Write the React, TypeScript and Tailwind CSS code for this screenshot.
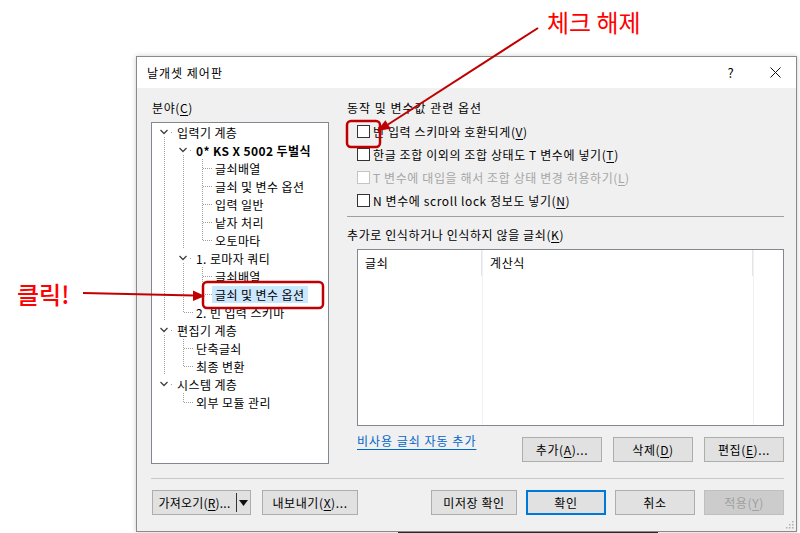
import React from 'react';

type Row = {
  label: string;
  level: number;
  chev?: boolean;
  next: boolean;
  anc: boolean[];
  bold?: boolean;
  selected?: boolean;
};

const rows: Row[] = [
  { label: '입력기 계층', level: 0, chev: true, next: true, anc: [] },
  { label: '0* KS X 5002 두벌식', level: 1, chev: true, next: true, anc: [true], bold: true },
  { label: '글쇠배열', level: 2, next: true, anc: [true, true] },
  { label: '글쇠 및 변수 옵션', level: 2, next: true, anc: [true, true] },
  { label: '입력 일반', level: 2, next: true, anc: [true, true] },
  { label: '낱자 처리', level: 2, next: true, anc: [true, true] },
  { label: '오토마타', level: 2, next: false, anc: [true, true] },
  { label: '1. 로마자 쿼티', level: 1, chev: true, next: true, anc: [true] },
  { label: '글쇠배열', level: 2, next: true, anc: [true, true] },
  { label: '글쇠 및 변수 옵션', level: 2, next: false, anc: [true, true], selected: true },
  { label: '2. 빈 입력 스키마', level: 1, next: false, anc: [true] },
  { label: '편집기 계층', level: 0, chev: true, next: true, anc: [] },
  { label: '단축글쇠', level: 1, next: true, anc: [true] },
  { label: '최종 변환', level: 1, next: false, anc: [true] },
  { label: '시스템 계층', level: 0, chev: true, next: false, anc: [] },
  { label: '외부 모듈 관리', level: 1, next: false, anc: [false] },
];

const DOT = '#a0a0a0';

// one 19x18 cell of the tree's dotted connectors
const Cell: React.FC<{ kind: 'pipe' | 'blank' | 'leaf' | 'chev'; next?: boolean }> = ({ kind, next }) => (
  <svg width="19" height="18" className="flex-none" shapeRendering="crispEdges">
    {kind === 'pipe' && <line x1="9.5" y1="0" x2="9.5" y2="18" stroke={DOT} strokeDasharray="1 1" />}
    {kind === 'leaf' && (
      <>
        <line x1="9.5" y1="0" x2="9.5" y2={next ? 18 : 10} stroke={DOT} strokeDasharray="1 1" />
        <line x1="10" y1="9.5" x2="19" y2="9.5" stroke={DOT} strokeDasharray="1 1" />
      </>
    )}
    {kind === 'chev' && (
      <>
        <path d="M5.5 7 L9 10.5 L12.5 7" fill="none" stroke="#404040" strokeWidth="1.3" shapeRendering="geometricPrecision" />
        <rect x="16" y="9" width="1" height="1" fill={DOT} />
        {next && <line x1="9.5" y1="14" x2="9.5" y2="18" stroke={DOT} strokeDasharray="1 1" />}
      </>
    )}
  </svg>
);

const TreeRow: React.FC<{ row: Row }> = ({ row }) => (
  <div className="flex h-[18px] items-center">
    {row.anc.map((a, i) => <Cell key={i} kind={a ? 'pipe' : 'blank'} />)}
    <Cell kind={row.chev ? 'chev' : 'leaf'} next={row.next} />
    <span
      className={
        'h-[17px] leading-[17px] pl-[3px] pr-[4px] whitespace-nowrap ' +
        (row.bold ? 'font-bold ' : '') +
        (row.selected ? 'bg-[#cce8ff]' : '')
      }
    >
      {row.label}
    </span>
  </div>
);

const Check: React.FC<{ children: React.ReactNode; disabled?: boolean }> = ({ children, disabled }) => (
  <div className={'flex h-[23px] items-center gap-[3px] ' + (disabled ? 'text-[#a6a6a6]' : '')}>
    <div className={'w-[13px] h-[13px] bg-white border ' + (disabled ? 'border-[#c4c4c4]' : 'border-[#333333]')} />
    <span className="whitespace-nowrap">{children}</span>
  </div>
);

const Btn: React.FC<{ w: string; children: React.ReactNode; focus?: boolean; disabled?: boolean }> = ({ w, children, focus, disabled }) => (
  <div
    className={
      w +
      ' h-[25px] flex items-center justify-center ' +
      (focus
        ? 'border-2 border-[#0078d7] bg-[#e1e1e1]'
        : disabled
          ? 'border border-[#bfbfbf] bg-[#cccccc] text-[#a0a0a0]'
          : 'border border-[#adadad] bg-[#e1e1e1]')
    }
  >
    {children}
  </div>
);

const U: React.FC<{ children: React.ReactNode }> = ({ children }) => (
  <span className="underline underline-offset-[2px]">{children}</span>
);

const App: React.FC = () => {
  return (
    <div className="relative w-[800px] h-[533px] bg-white overflow-hidden text-[12px] leading-[16px] tracking-[0.6px] text-black font-['Noto_Sans_CJK_KR','Noto_Sans',sans-serif]">
      <div className="pt-[56px] pl-[136px]">
        <div className="relative w-[661px] h-[476px] border border-[#8a8a8a] bg-[#f0f0f0] flex flex-col shadow-[0_0_5px_rgba(0,0,0,0.2)]">
          {/* title bar */}
          <div className="h-[31px] bg-white flex items-center pl-[10px] pr-[6px] flex-none">
            <span className="flex-1 tracking-[1px]">날개셋 제어판</span>
            <span className="w-[30px] text-center text-[13px]">?</span>
            <span className="w-[14px]" />
            <span className="w-[30px] flex justify-center">
              <svg width="11" height="11" viewBox="0 0 11 11">
                <path d="M0.5 0.5 L10.5 10.5 M10.5 0.5 L0.5 10.5" stroke="#111" strokeWidth="1" />
              </svg>
            </span>
          </div>

          <div className="flex-1 pl-[14px] pr-[12px] pt-[12px] flex flex-col">
            <div className="flex gap-[18px] h-[364px]">
              {/* left: tree */}
              <div className="w-[178px] flex flex-col">
                <div className="h-[16px] pl-[1px]">분야(<U>C</U>)</div>
                <div className="mt-[6px] flex-1 bg-white border border-[#828790] pl-[3px] tracking-[0.4px]">
                  {rows.map((r, i) => <TreeRow key={i} row={r} />)}
                </div>
              </div>

              {/* right: options */}
              <div className="w-[437px] flex flex-col">
                <div className="h-[16px] tracking-[1px]">동작 및 변수값 관련 옵션</div>
                <div className="mt-[4px] pl-[10px]">
                  <Check>빈 입력 스키마와 호환되게(<U>V</U>)</Check>
                  <Check>한글 조합 이외의 조합 상태도 T 변수에 넣기(<U>T</U>)</Check>
                  <Check disabled>T 변수에 대입을 해서 조합 상태 변경 허용하기(<U>L</U>)</Check>
                  <Check>N 변수에 scroll lock 정보도 넣기(<U>N</U>)</Check>
                </div>
                <div className="mt-[4px] h-px bg-[#a0a0a0]" />
                <div className="mt-[10px] h-[16px]">추가로 인식하거나 인식하지 않을 글쇠(<U>K</U>)</div>
                <div className="mt-[6px] ml-[10px] h-[177px] bg-white border border-[#828790] flex">
                  <div className="w-[125px] border-r border-[#eef2f7]">
                    <div className="h-[26px] pl-[7px] flex items-center border-r border-[#e5e5e5]">글쇠</div>
                  </div>
                  <div className="w-[271px] border-r border-[#eef2f7]">
                    <div className="h-[26px] pl-[7px] flex items-center border-r border-[#e5e5e5]">계산식</div>
                  </div>
                  <div className="flex-1" />
                </div>
                <div className="mt-[11px] flex items-start">
                  <span className="ml-[10px] mt-[-4px] text-[#0066cc] underline underline-offset-[3px] tracking-[1px]">비사용 글쇠 자동 추가</span>
                  <div className="flex-1" />
                  <div className="flex gap-[11px]">
                    <Btn w="w-[80px]">추가(<U>A</U>)...</Btn>
                    <Btn w="w-[80px]">삭제(<U>D</U>)</Btn>
                    <Btn w="w-[80px]">편집(<U>E</U>)...</Btn>
                  </div>
                </div>
              </div>
            </div>

            <div className="mt-[14px] h-px bg-[#c8c8c8]" />

            <div className="mt-[11px] flex items-center">
              <div className="ml-[1px] w-[99px] h-[25px] border border-[#adadad] bg-[#e1e1e1] flex items-center">
                <span className="w-[83px] text-center tracking-[0.2px]">가져오기(<U>R</U>)...</span>
                <div className="w-px h-[19px] bg-[#333333]" />
                <div className="flex-1 flex justify-center">
                  <svg width="9" height="6" viewBox="0 0 9 6">
                    <path d="M0 0 H9 L4.5 6 Z" fill="#111" />
                  </svg>
                </div>
              </div>
              <div className="w-[11px]" />
              <Btn w="w-[96px]">내보내기(<U>X</U>)...</Btn>
              <div className="flex-1" />
              <div className="flex gap-[9px]">
                <Btn w="w-[86px]">미저장 확인</Btn>
                <Btn w="w-[80px]" focus>확인</Btn>
                <Btn w="w-[80px]">취소</Btn>
                <Btn w="w-[80px]" disabled>적용(<U>Y</U>)</Btn>
              </div>
            </div>
          </div>

          {/* size grip */}
          <svg width="8" height="8" className="absolute right-[2px] bottom-[2px]">
            <rect x="6" y="0" width="1.5" height="1.5" fill="#b0b0b0" />
            <rect x="3" y="3" width="1.5" height="1.5" fill="#b0b0b0" />
            <rect x="6" y="3" width="1.5" height="1.5" fill="#b0b0b0" />
            <rect x="0" y="6" width="1.5" height="1.5" fill="#b0b0b0" />
            <rect x="3" y="6" width="1.5" height="1.5" fill="#b0b0b0" />
            <rect x="6" y="6" width="1.5" height="1.5" fill="#b0b0b0" />
          </svg>
        </div>
        <div className="ml-[262px] w-[260px] h-[2px] bg-[#2b2b2b]" />
      </div>

      {/* annotations */}
      <div className="absolute left-[547px] top-[6px] text-[24px] leading-[32px] tracking-normal text-[#ff0000]">체크 해제</div>
      <div className="absolute left-[17px] top-[278px] text-[24px] leading-[32px] tracking-normal font-medium text-[#ff0000]">클릭!</div>
      <svg className="absolute left-0 top-0 pointer-events-none" width="800" height="533">
        <rect x="347" y="121" width="33" height="26" rx="4" fill="none" stroke="#c00000" strokeWidth="2.5" />
        <rect x="203" y="282" width="120" height="26" rx="4" fill="none" stroke="#c00000" strokeWidth="2.5" />
        <line x1="83" y1="293" x2="194" y2="295.5" stroke="#c00000" strokeWidth="2" />
        <path d="M205 296 L193 290.5 L193 301 Z" fill="#c00000" />
        <line x1="538" y1="28" x2="388" y2="124.5" stroke="#c00000" strokeWidth="2" />
        <path d="M377 131 L390.8 128.7 L385.4 120.3 Z" fill="#c00000" />
      </svg>
    </div>
  );
};

export default App;
